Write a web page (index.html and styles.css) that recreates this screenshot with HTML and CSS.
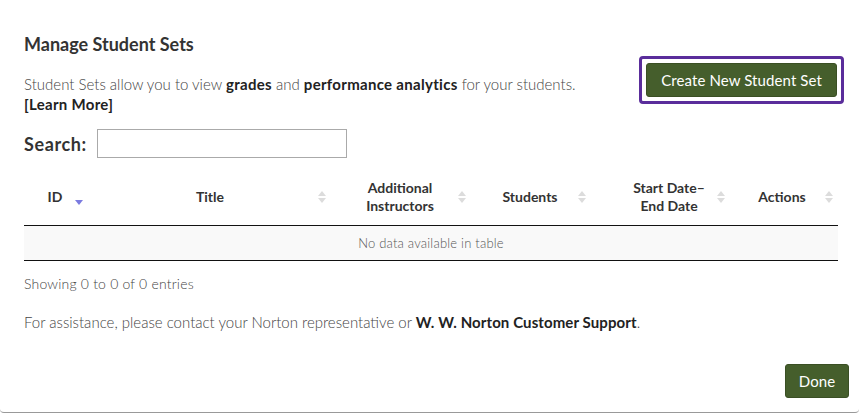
FILE: index.html
```html
<!DOCTYPE html>
<html>
<head>
<meta charset="utf-8">
<link rel="stylesheet" href="styles.css">
</head>
<body>
<div class="modal">
  <h2 class="title">Manage Student Sets</h2>
  <div class="intro">
    <p class="desc">Student Sets allow you to view <b>grades</b> and <b>performance analytics</b> for your students.<br><b class="learn">[Learn More]</b></p>
    <span class="focus-ring"><button class="btn btn-create">Create New Student Set</button></span>
  </div>
  <div class="search">
    <label class="search-label">Search:</label>
    <input class="search-input" type="text">
  </div>
  <table class="grid">
    <thead>
      <tr>
        <th class="c-id">ID<svg class="sort" viewBox="0 0 8 16" width="8" height="16"><path d="M0 9h8l-4 5z" fill="#7b7be0"/></svg></th>
        <th class="c-title">Title<svg class="sort" viewBox="0 0 8 16" width="8" height="16"><path d="M4 2l4 5H0z" fill="#dcdcdc"/><path d="M0 9h8l-4 5z" fill="#dcdcdc"/></svg></th>
        <th class="c-add">Additional<br>Instructors<svg class="sort" viewBox="0 0 8 16" width="8" height="16"><path d="M4 2l4 5H0z" fill="#dcdcdc"/><path d="M0 9h8l-4 5z" fill="#dcdcdc"/></svg></th>
        <th class="c-stu">Students<svg class="sort" viewBox="0 0 8 16" width="8" height="16"><path d="M4 2l4 5H0z" fill="#dcdcdc"/><path d="M0 9h8l-4 5z" fill="#dcdcdc"/></svg></th>
        <th class="c-date">Start Date–<br>End Date<svg class="sort" viewBox="0 0 8 16" width="8" height="16"><path d="M4 2l4 5H0z" fill="#dcdcdc"/><path d="M0 9h8l-4 5z" fill="#dcdcdc"/></svg></th>
        <th class="c-act">Actions<svg class="sort" viewBox="0 0 8 16" width="8" height="16"><path d="M4 2l4 5H0z" fill="#dcdcdc"/><path d="M0 9h8l-4 5z" fill="#dcdcdc"/></svg></th>
      </tr>
    </thead>
    <tbody>
      <tr><td class="empty" colspan="6">No data available in table</td></tr>
    </tbody>
  </table>
  <p class="info">Showing 0 to 0 of 0 entries</p>
  <p class="help">For assistance, please contact your Norton representative or <b>W. W. Norton Customer Support</b>.</p>
  <div class="footer">
    <button class="btn btn-done">Done</button>
  </div>
</div>
</body>
</html>
```
FILE: styles.css
```css
* { box-sizing: border-box; }
html, body { margin: 0; padding: 0; background: #fff; }
body { font-family: Lato, "Liberation Sans", sans-serif; color: #444; }
.modal {
  width: 859px;
  height: 413px;
  padding: 32px 21px 0 24px;
  border-bottom: 1px solid #999;
  border-radius: 0 0 4px 4px;
  display: flex;
  flex-direction: column;
}
.title { margin: 0; font-size: 18px; line-height: 24px; font-weight: 700; color: #333; }
.intro { display: flex; justify-content: space-between; align-items: flex-start; }
.desc { margin: 18px 0 0; font-size: 15px; line-height: 20px; font-weight: 300; color: #444; }
.desc b { font-weight: 700; color: #222; letter-spacing: 0.3px; }
.focus-ring {
  display: flex;
  border: 3px solid #5a2d9b;
  border-radius: 4px;
  padding: 4px;
  margin-right: -6px;
}
.btn {
  font-family: inherit;
  background: #455e2c;
  border: 1px solid #3a4f24;
  border-radius: 3px;
  color: #fff;
  font-size: 15px;
  letter-spacing: 0.1px;
  cursor: pointer;
}
.btn-create { height: 34px; padding: 0 14px; }
.search { display: flex; align-items: center; gap: 10px; margin-top: 15px; }
.search-label { font-size: 18px; font-weight: 700; color: #333; letter-spacing: 0.6px; }
.search-input { width: 250px; height: 29px; border: 1px solid #aaa; margin: 0; }
.grid { width: 100%; border-collapse: collapse; margin-top: 12px; table-layout: fixed; }
.grid th {
  position: relative;
  font-size: 14px;
  line-height: 18px;
  font-weight: 700;
  color: #333;
  padding: 9px 18px 9px 10px;
  height: 55px;
  border-bottom: 1px solid #111;
  text-align: center;
}
.sort { position: absolute; right: 8px; top: 50%; margin-top: -8px; }
.c-id { width: 70px; }
.c-id .sort { right: 11px; margin-top: -6px; }
.c-title { width: 240px; }
.c-add { width: 140px; }
.c-stu { width: 120px; }
.grid th.c-date { width: 140px; padding-left: 20px; padding-right: 10px; }
.c-date .sort { right: 9px; }
.c-act { width: 104px; }
.c-act .sort { right: 5px; }
.empty {
  height: 35px;
  background: #f9f9f9;
  border-bottom: 1px solid #111;
  text-align: center;
  font-size: 13px;
  letter-spacing: 0.2px;
  font-weight: 300;
  color: #555;
  padding: 0;
}
.info { margin: 13px 0 0; font-size: 14px; line-height: 20px; font-weight: 300; letter-spacing: 0.2px; }
.help { margin: 18px 0 0; font-size: 15px; line-height: 20px; font-weight: 300; }
.help b { font-weight: 700; color: #222; letter-spacing: 0.1px; }
.footer { display: flex; justify-content: flex-end; margin-top: 32px; margin-right: -11px; }
.btn-done { height: 34px; width: 64px; padding: 0; }
```
